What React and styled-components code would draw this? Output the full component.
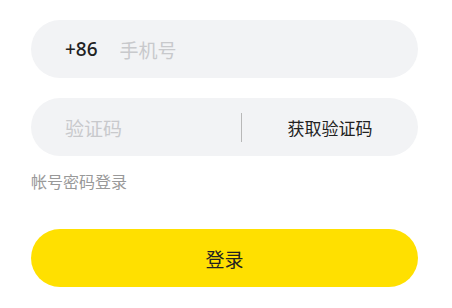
import React, { useState } from "react";
import styled, { createGlobalStyle } from "styled-components";

const GlobalStyle = createGlobalStyle`
  html, body {
    margin: 0;
    padding: 0;
    background: #fff;
    font-family: "Noto Sans CJK SC", "Noto Sans", sans-serif;
  }
`;

// Styled Components
const Page = styled.div`
  width: 452px;
  height: 308px;
  box-sizing: border-box;
  padding: 20px 34px 0 31px;
  display: flex;
  flex-direction: column;
`;

const Field = styled.div`
  height: 58px;
  border-radius: 29px;
  background: #f2f3f5;
  display: flex;
  align-items: center;
  padding: 0 0 0 34px;
  margin-bottom: ${(p) => p.$gap || 0}px;
`;

const Prefix = styled.span`
  font-family: "Noto Sans", "Noto Sans CJK SC", sans-serif;
  font-size: 19px;
  font-weight: 500;
  color: #222;
  margin-right: 22px;
`;

const Input = styled.input`
  flex: 1;
  min-width: 0;
  border: none;
  outline: none;
  background: transparent;
  font-family: "Noto Sans CJK SC", sans-serif;
  font-size: 19px;
  color: #222;
  padding: 0;

  &::placeholder {
    color: #c8c9cc;
  }
`;

const Divider = styled.div`
  width: 1px;
  height: 29px;
  background: #b8b8b8;
`;

const CodeButton = styled.button`
  width: 176px;
  border: none;
  background: transparent;
  font-family: "Noto Sans CJK SC", sans-serif;
  font-size: 17px;
  color: #222;
  cursor: pointer;
  padding: 0;
`;

const SwitchLink = styled.a`
  margin-top: 13px;
  font-size: 16px;
  color: #999;
  line-height: 24px;
  cursor: pointer;
`;

const Submit = styled.button`
  margin-top: 36px;
  height: 58px;
  border: none;
  border-radius: 29px;
  background: #ffe000;
  font-family: "Noto Sans CJK SC", sans-serif;
  font-size: 19px;
  color: #222;
  cursor: pointer;
`;

const App = () => {
  const [phone, setPhone] = useState("");
  const [code, setCode] = useState("");

  return (
    <>
      <GlobalStyle />
      <Page>
        <Field $gap={20}>
          <Prefix>+86</Prefix>
          <Input
            placeholder="手机号"
            value={phone}
            onChange={(e) => setPhone(e.target.value)}
          />
        </Field>
        <Field>
          <Input
            placeholder="验证码"
            value={code}
            onChange={(e) => setCode(e.target.value)}
          />
          <Divider />
          <CodeButton>获取验证码</CodeButton>
        </Field>
        <SwitchLink>帐号密码登录</SwitchLink>
        <Submit>登录</Submit>
      </Page>
    </>
  );
};

export default App;
